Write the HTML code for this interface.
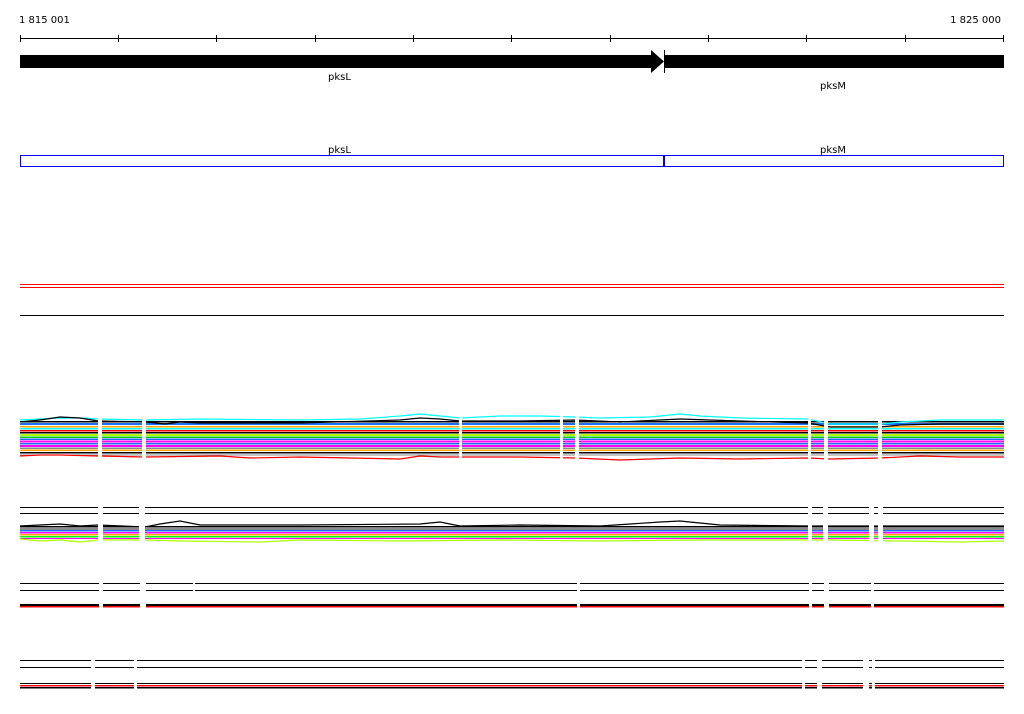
<!DOCTYPE html>
<html><head><meta charset="utf-8"><style>
html,body{margin:0;padding:0;background:#fff;}
svg{display:block}
text{font-family:"DejaVu Sans","Liberation Sans",sans-serif;font-size:10px;fill:#000}
</style></head><body>
<svg width="1024" height="714" viewBox="0 0 1024 714" xmlns="http://www.w3.org/2000/svg" shape-rendering="crispEdges">
<text x="19" y="23">1 815 001</text>
<text x="1001" y="23" text-anchor="end">1 825 000</text>
<g stroke="#000" stroke-width="1">
<line x1="20" y1="38.5" x2="1004" y2="38.5"/>
<path d="M20.5 35v7M118.5 35v7M216.5 35v7M315.5 35v7M413.5 35v7M511.5 35v7M610.5 35v7M708.5 35v7M806.5 35v7M905.5 35v7M1003.5 35v7"/>
</g>
<rect x="20" y="55" width="632" height="13" fill="#000"/>
<polygon points="651,50 664,61.5 651,73" fill="#000" shape-rendering="auto"/>
<line x1="664.5" y1="50" x2="664.5" y2="73" stroke="#000"/>
<rect x="665" y="55" width="339" height="13" fill="#000"/>
<text x="328" y="80">pksL</text>
<text x="820" y="89">pksM</text>
<text x="328" y="153">pksL</text>
<text x="820" y="153">pksM</text>
<rect x="20.5" y="155.5" width="983" height="11" fill="none" stroke="#00f"/>
<rect x="663" y="155" width="2" height="12" fill="#00f"/>
<line x1="20" y1="284.5" x2="1004" y2="284.5" stroke="#f00"/>
<line x1="20" y1="287.5" x2="1004" y2="287.5" stroke="#f00"/>
<line x1="20" y1="315.5" x2="1004" y2="315.5" stroke="#000"/>

<!-- band 1 -->
<g>
<rect x="20" y="421" width="984" height="1.5" fill="#000"/>
<rect x="20" y="423" width="984" height="2" fill="#1e6fff"/>
<rect x="20" y="426" width="984" height="1.5" fill="#ffa500"/>
<rect x="20" y="428" width="984" height="1.5" fill="#0ff"/>
<rect x="20" y="430" width="984" height="1.5" fill="#f00"/>
<rect x="20" y="432" width="984" height="1.5" fill="#000"/>
<rect x="20" y="434" width="984" height="2" fill="#b0ff00"/>
<rect x="20" y="436.5" width="984" height="1.5" fill="#00d000"/>
<rect x="20" y="438.5" width="984" height="1.5" fill="#1e6fff"/>
<rect x="20" y="440.5" width="984" height="2" fill="#f0f"/>
<rect x="20" y="443" width="984" height="1.5" fill="#1e6fff"/>
<rect x="20" y="445" width="984" height="2" fill="#f0f"/>
<rect x="20" y="447.5" width="984" height="1.5" fill="#888"/>
<rect x="20" y="449.5" width="984" height="1.5" fill="#ffa500"/>
<rect x="20" y="452" width="984" height="1.5" fill="#000"/>
<rect x="20" y="454.5" width="984" height="1" fill="#888"/>
</g>
<g fill="none" stroke-width="1.2" shape-rendering="auto">
<polyline stroke="#0ff" points="20,420 40,419 60,418 80,418 98,419 145,420 200,419 300,420 360,419 400,416 420,414 440,416 460,418 500,416 540,416 575,417 600,418 650,417 680,414 700,416 740,418 808,419 830,424 880,424 900,422 940,420 975,420 1004,420"/>
<polyline stroke="#000" points="20,422 40,420 60,417 80,418 98,421 145,422 165,424 180,422 200,423 300,423 400,420 420,418 440,419 460,421 520,421 575,420 620,422 680,419 740,421 808,423 830,427 880,427 900,425 940,424 1004,424"/>
<polyline stroke="#f00" points="20,456 40,455 60,455 98,456 145,457 220,456 250,458 300,457 400,459 420,456 440,457 520,457 575,458 620,460 680,458 740,459 808,458 830,459 880,458 920,456 960,457 1004,457"/>
</g>
<g fill="#fff">
<rect x="98" y="410" width="4" height="55"/><rect x="142" y="410" width="4" height="55"/>
<rect x="459" y="410" width="3" height="55"/><rect x="560" y="410" width="3" height="55"/>
<rect x="575" y="410" width="4" height="55"/><rect x="808" y="410" width="3" height="55"/>
<rect x="824" y="410" width="4" height="55"/><rect x="878" y="410" width="4" height="55"/>
</g>

<!-- band 2 -->
<g stroke="#000"><line x1="20" y1="507.5" x2="1004" y2="507.5"/><line x1="20" y1="513.5" x2="1004" y2="513.5"/></g>
<g>
<rect x="20" y="526" width="984" height="1.5" fill="#000"/>
<rect x="20" y="528" width="984" height="2" fill="#888"/>
<rect x="20" y="530" width="984" height="1.5" fill="#1e6fff"/>
<rect x="20" y="532" width="984" height="1.5" fill="#f0f"/>
<rect x="20" y="534" width="984" height="1.5" fill="#ffa500"/>
<rect x="20" y="536" width="984" height="1.5" fill="#0f0"/>
<rect x="20" y="538" width="984" height="1" fill="#f0f"/>
</g>
<g fill="none" stroke-width="1.2" shape-rendering="auto">
<polyline stroke="#000" points="20,526 40,525 60,524 80,526 98,525 145,527 160,524 180,521 200,525 300,525 420,524 440,522 460,526 520,525 600,526 660,522 680,521 700,523 720,525 808,526 830,526 900,526 1004,526"/>
<polyline stroke="#b0ff00" points="20,539 40,541 60,540 80,542 98,540 145,540 180,541 260,542 300,540 400,541 500,540 600,541 700,540 808,540 830,540 900,541 960,542 1004,541"/>
</g>
<g fill="#fff">
<rect x="98" y="500" width="5" height="45"/><rect x="139" y="500" width="6" height="45"/>
<rect x="808" y="500" width="4" height="45"/><rect x="823" y="500" width="5" height="45"/>
<rect x="869" y="500" width="5" height="45"/><rect x="878" y="500" width="5" height="45"/>
</g>

<!-- band 3 -->
<g stroke="#000"><line x1="20" y1="583.5" x2="1004" y2="583.5"/><line x1="20" y1="590.5" x2="1004" y2="590.5"/></g>
<rect x="20" y="604" width="984" height="2" fill="#000"/>
<rect x="20" y="606" width="984" height="1.5" fill="#f00"/>
<g fill="#fff">
<rect x="99" y="578" width="4" height="35"/><rect x="140" y="578" width="6" height="35"/>
<rect x="193" y="578" width="2" height="16"/><rect x="577" y="578" width="3" height="35"/>
<rect x="809" y="578" width="3" height="35"/><rect x="824" y="578" width="5" height="35"/>
<rect x="871" y="578" width="3" height="35"/>
</g>

<!-- band 4 -->
<g stroke="#000"><line x1="20" y1="660.5" x2="1004" y2="660.5"/><line x1="20" y1="667.5" x2="1004" y2="667.5"/></g>
<rect x="20" y="683" width="984" height="1" fill="#000"/>
<rect x="20" y="685" width="984" height="1.5" fill="#f00"/>
<rect x="20" y="687" width="984" height="1.5" fill="#000"/>
<g fill="#fff">
<rect x="91" y="655" width="4" height="38"/><rect x="134" y="655" width="3" height="38"/>
<rect x="802" y="655" width="3" height="38"/><rect x="817" y="655" width="5" height="38"/>
<rect x="863" y="655" width="6" height="38"/><rect x="872" y="655" width="3" height="38"/>
</g>
</svg>
</body></html>
